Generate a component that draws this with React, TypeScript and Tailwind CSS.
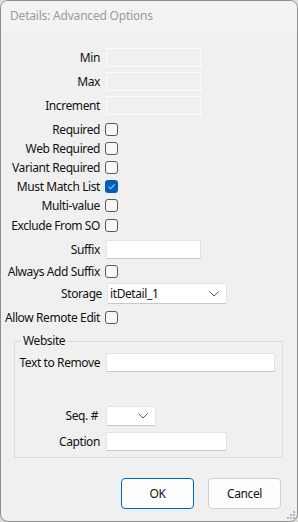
const font = { fontFamily: '"Noto Sans", "Liberation Sans", sans-serif' };

const Label = ({ text, w = "w-[99px]" }: { text: string; w?: string }) => (
  <div className={`${w} shrink-0 text-right leading-none whitespace-nowrap`}>{text}</div>
);

const TextBox = ({ w, disabled }: { w: string; disabled?: boolean }) =>
  disabled ? (
    <div className={`${w} h-[19px] ml-[1px] bg-[#f0f0f0] border border-[#fbfbfb]`} />
  ) : (
    <div className={`${w} h-[19px] ml-[1px] bg-white border border-[#e3e3e3] border-b-[#c8c8c8]`} />
  );

const Check = ({ checked }: { checked?: boolean }) =>
  checked ? (
    <div className="w-[13px] h-[13px] rounded-[3px] bg-[#005fb8] flex items-center justify-center">
      <svg width="9" height="9" viewBox="0 0 9 9" fill="none">
        <path d="M1.5 4.8 L3.6 6.8 L7.6 2.4" stroke="white" strokeWidth="1" />
      </svg>
    </div>
  ) : (
    <div className="w-[13px] h-[13px] rounded-[3px] bg-[#f7f7f7] border border-[#5a5a5a]" />
  );

const Chevron = () => (
  <svg width="10" height="6" viewBox="0 0 10 6" fill="none">
    <path d="M0.5 0.5 L5 5 L9.5 0.5" stroke="#555" strokeWidth="1" />
  </svg>
);

const CheckRow = ({ text, checked, mt = "mt-0" }: { text: string; checked?: boolean; mt?: string }) => (
  <div className={`flex items-center gap-[5px] h-[19px] ${mt}`}>
    <Label text={text} />
    <Check checked={checked} />
  </div>
);

const InputRow = ({ text, mt, disabled }: { text: string; mt: string; disabled?: boolean }) => (
  <div className={`flex items-center gap-[5px] h-[19px] ${mt}`}>
    <Label text={text} />
    <TextBox w="w-[95px]" disabled={disabled} />
  </div>
);

export default function App() {
  return (
    <div className="w-[298px] h-[522px] bg-[#dedbd2] text-[12px] tracking-[-0.4px] text-[#111]" style={font}>
      <div className="w-[298px] h-[522px] border border-[#8e8e8e] rounded-[8px] overflow-hidden flex flex-col bg-[#f0f0f0]">
        <div className="h-[30px] shrink-0 bg-[#f3f3f3] flex items-center pl-[9px] text-[#9b9b9b] tracking-[-0.2px]">
          Details: Advanced Options
        </div>

        <div className="flex-1 flex flex-col relative">
          <InputRow text="Min" mt="mt-[17px]" disabled />
          <InputRow text="Max" mt="mt-[5px]" disabled />
          <InputRow text="Increment" mt="mt-[5px]" disabled />

          <CheckRow text="Required" mt="mt-[5px]" />
          <CheckRow text="Web Required" />
          <CheckRow text="Variant Required" />
          <CheckRow text="Must Match List" checked />
          <CheckRow text="Multi-value" />
          <CheckRow text="Exclude From SO" mt="mt-[1px]" />

          <InputRow text="Suffix" mt="mt-[5px]" />
          <CheckRow text="Always Add Suffix" mt="mt-[3px]" />

          <div className="flex items-center gap-[5px] h-[21px] mt-[2px]">
            <Label text="Storage" w="w-[101px]" />
            <div className="w-[120px] h-[21px] bg-white border border-[#e3e3e3] border-b-[#c8c8c8] rounded-[2px] flex items-center justify-between pl-[2px] pr-[7px]">
              <span className="leading-none">itDetail_1</span>
              <Chevron />
            </div>
          </div>

          <CheckRow text="Allow Remote Edit" mt="mt-[4px]" />

          <fieldset className="ml-[13px] w-[269px] mt-[6px] border border-[#dcdcdc] px-0 pb-[6px]">
            <legend className="ml-[6px] px-[2px] leading-[16px]">Website</legend>
            <div className="flex items-center gap-[6px] h-[19px] mt-[4px]">
              <Label text="Text to Remove" w="w-[85px]" />
              <div className="w-[169px] h-[19px] bg-white border border-[#e3e3e3] border-b-[#c8c8c8]" />
            </div>
            <div className="flex items-center gap-[6px] h-[20px] mt-[34px]">
              <Label text="Seq. #" w="w-[83px]" />
              <div className="ml-[2px] w-[50px] h-[20px] bg-white border border-[#e3e3e3] border-b-[#c8c8c8] rounded-[2px] flex items-center justify-end pr-[7px]">
                <Chevron />
              </div>
            </div>
            <div className="flex items-center gap-[6px] h-[19px] mt-[6px]">
              <Label text="Caption" w="w-[85px]" />
              <div className="w-[121px] h-[19px] bg-white border border-[#e3e3e3] border-b-[#c8c8c8]" />
            </div>
          </fieldset>

          <div className="flex justify-end gap-[14px] pr-[16px] mt-[20px]">
            <button className="w-[73px] h-[31px] rounded-[4px] bg-[#fdfdfd] border border-[#0067c0] flex items-center justify-center">
              OK
            </button>
            <button className="w-[73px] h-[31px] rounded-[4px] bg-[#fdfdfd] border border-[#d0d0d0] flex items-center justify-center">
              Cancel
            </button>
          </div>

          <svg className="absolute right-[2px] bottom-[2px]" width="10" height="10" viewBox="0 0 10 10">
            {[
              [8, 0], [8, 3], [5, 3], [8, 6], [5, 6], [2, 6],
            ].map(([x, y], i) => (
              <rect key={i} x={x} y={y + 2} width="2" height="2" fill="#b5b5b5" />
            ))}
          </svg>
        </div>
      </div>
    </div>
  );
}
